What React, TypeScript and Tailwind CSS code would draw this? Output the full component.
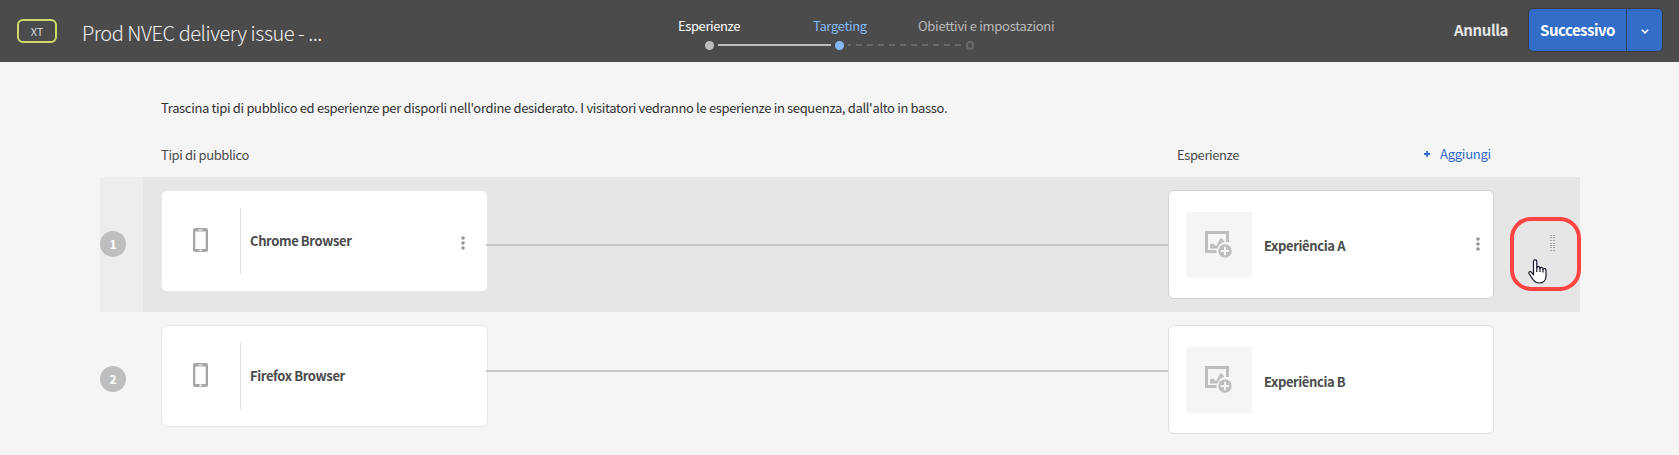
type Row = { id: number; audience: string; experience: string; active: boolean };

const rows: Row[] = [
  { id: 1, audience: "Chrome Browser", experience: "Experiência A", active: true },
  { id: 2, audience: "Firefox Browser", experience: "Experiência B", active: false },
];

function PhoneIcon() {
  return (
    <svg width="15" height="24" viewBox="0 0 15 24" className="block">
      <path
        fill="#a6a6a6"
        fillRule="evenodd"
        d="M2 0h11a2 2 0 0 1 2 2v20a2 2 0 0 1-2 2H2a2 2 0 0 1-2-2V2a2 2 0 0 1 2-2ZM2.300 3.600v17.400h10.400V3.600ZM5.500 1.400v1h4v-1ZM6.400 21.600v1.600h2.200v-1.600Z"
      />
    </svg>
  );
}

function ImageAddIcon() {
  return (
    <svg width="27" height="27" viewBox="0 0 27 27" className="block">
      <path fill="none" stroke="#bebebe" strokeWidth="3" d="M11.5 20.5H1.5V1.5h21v9.5" />
      <path fill="#bebebe" d="M5 17.5v-3.2c.6-1.4 2.3-2.4 3.8-1.2l2.3 2.1 4-7.4c.5-.8 1.6-.8 2.2 0l2 2.9c-3.400.7-6.100 3.400-6.800 6.800Z" />
      <circle cx="20" cy="20" r="6.700" fill="#bebebe" />
      <path stroke="#f5f5f5" strokeWidth="2" d="M20 15.700v8.600M15.700 20h8.600" />
    </svg>
  );
}

function MoreIcon() {
  return (
    <svg width="4" height="14" viewBox="0 0 4 14" className="block" fill="#969696">
      <circle cx="2" cy="2" r="1.800" />
      <circle cx="2" cy="7" r="1.800" />
      <circle cx="2" cy="12" r="1.800" />
    </svg>
  );
}

function DragHandle() {
  return (
    <svg width="6" height="17" viewBox="0 0 6 17" className="block" fill="#a8a8a8">
      {[0, 2, 5, 8, 10, 12, 15].map((y) => (
        <g key={y}>
          <rect x="0" y={y} width="2" height="1" />
          <rect x="3" y={y} width="2" height="1" />
        </g>
      ))}
    </svg>
  );
}

function HandCursor() {
  return (
    <svg width="19" height="25" viewBox="0 0 19 25" className="block">
      <path
        fill="#fff"
        stroke="#15152a"
        strokeWidth="1.200"
        strokeLinejoin="round"
        d="M5.500 16V2.500C5.500.3 8.800.3 8.800 2.500V8.500C9.500 7 12 7.300 12 9.200 12.800 8 15 8.300 15 10 16 9 18 9.600 18 11.300V17C18 21 15.500 24 11.300 24 8 24 6.300 22.800 4.900 20.300L1 14.500C.3 12.800 2.200 11.900 3.400 13.200Z"
      />
      <path stroke="#15152a" strokeWidth="1.200" d="M8.800 8v5M12 9v4M15 10v3.500" />
    </svg>
  );
}

function Header() {
  return (
    <header className="flex h-[62px] items-start bg-[#4b4b4b]">
      <div className="mt-[19px] ml-[17px] flex h-6 w-10 items-center justify-center rounded-[6px] border-2 border-[#d0dc68] text-[11px] leading-5 text-[#d6d6d6]">
        XT
      </div>
      <h1 className="mt-[19px] ml-[25px] w-[596px] text-[20px] leading-7 font-light tracking-[-0.450px] text-[#f0f0f0]">
        Prod NVEC delivery issue - ...
      </h1>

      <nav className="mt-[16px] w-[380px]">
        <div className="flex text-[13px] leading-5 whitespace-nowrap">
          <span className="w-[135px] tracking-[-0.400px] text-white">Esperienze</span>
          <span className="w-[105px] tracking-[-0.340px] text-[#82b8f8]">Targeting</span>
          <span className="tracking-[-0.290px] text-[#b9b9b9]">Obiettivi e impostazioni</span>
        </div>
        <div className="mt-[5px] ml-[27px] flex h-[9px] items-center">
          <span className="size-[9px] rounded-full bg-[#bebebe]" />
          <span className="mx-1 mb-px h-[2px] w-[113px] bg-[#bebebe]" />
          <span className="mr-1 size-[9px] rounded-full bg-[#82b8f8]" />
          <svg width="114" height="2" className="mr-1 mb-px block">
            <path d="M0 1h114" stroke="#6a6a6a" strokeWidth="2" strokeDasharray="6 5" strokeDashoffset="3" />
          </svg>
          <span className="h-[9px] w-2 rounded-full border-2 border-[#696969]" />
        </div>
      </nav>

      <div className="mt-[8px] mr-4 ml-auto flex h-[44px] items-center">
        <button className="mr-[20px] text-[15px] leading-5 font-bold tracking-[-0.400px] text-[#e4e4e4]">Annulla</button>
        <div className="flex h-[44px] overflow-hidden rounded-[5px] border border-[#3a3a3a] bg-[#326ec8]">
          <button className="w-[98px] border-r border-[#2c4167] text-center text-[15px] leading-5 font-bold tracking-[-0.500px] text-white">
            Successivo
          </button>
          <button className="flex w-[35px] items-center justify-center pt-[3px]">
            <svg width="8" height="5" viewBox="0 0 8 5" className="block">
              <path d="M.8.8 4 3.900 7.200.8" fill="none" stroke="#fff" strokeWidth="1.500" />
            </svg>
          </button>
        </div>
      </div>
    </header>
  );
}

function TargetRow({ row }: { row: Row }) {
  return (
    <div className="flex h-[135px] w-[1480px]">
      <div className={row.active ? "w-[43px] bg-[#ededed] pt-[54px]" : "w-[43px] pt-[54px]"}>
        <div className="flex size-[26px] items-center justify-center rounded-full bg-[#bebebe] text-[12px] leading-5 font-bold text-white">
          {row.id}
        </div>
      </div>
      <div className={row.active ? "flex flex-1 items-start bg-[#e6e6e6] pt-[13px] pl-[18px]" : "flex flex-1 items-start pt-[13px] pl-[18px]"}>
        <div className="flex h-[102px] w-[327px] items-center rounded-[6px] border border-[#e9e9e9] bg-white">
          <div className="mb-[2px] ml-[31px]">
            <PhoneIcon />
          </div>
          <div className="ml-[32px] h-[66px] w-px bg-[#dedede]" />
          <span className="mb-px ml-[9px] text-[13px] leading-5 font-bold tracking-[-0.380px] text-[#4b4b4b]">{row.audience}</span>
          {row.active && (
            <div className="mt-[3px] mr-[22px] ml-auto">
              <MoreIcon />
            </div>
          )}
        </div>
        <div className={row.active ? "z-10 mt-[54px] -ml-[2px] h-[2px] w-[682px] bg-[#c6c6c6]" : "z-10 mt-[45px] -ml-[2px] h-[2px] w-[682px] bg-[#c6c6c6]"} />
        <div className={row.active ? "flex h-[109px] w-[326px] items-center rounded-[6px] border border-[#d2d2d2] bg-white" : "flex h-[109px] w-[326px] items-center rounded-[6px] border border-[#e0e0e0] bg-white"}>
          <div className="ml-[17px] flex size-[66px] items-center justify-center bg-[#f5f5f5] pr-px">
            <ImageAddIcon />
          </div>
          <span className={row.active ? "mt-[3px] ml-[12px] text-[13px] leading-5 font-bold tracking-[-0.370px] text-[#4b4b4b]" : "mt-[5px] ml-[12px] text-[13px] leading-5 font-bold tracking-[-0.400px] text-[#4b4b4b]"}>
            {row.experience}
          </span>
          {row.active && (
            <div className="mr-[13px] mb-[2px] ml-auto">
              <MoreIcon />
            </div>
          )}
        </div>
        {row.active && (
          <div className="mt-[45px] ml-[56px]">
            <DragHandle />
          </div>
        )}
      </div>
    </div>
  );
}

export default function App() {
  return (
    <div className="relative h-[455px] w-[1679px] overflow-hidden bg-[#f5f5f5] font-['Noto_Sans_CJK_SC',sans-serif]">
      <Header />
      <main className="pt-[36px] pl-[100px]">
        <p className="ml-[61px] text-[13px] leading-5 tracking-[-0.338px] text-[#323232]">
          Trascina tipi di pubblico ed esperienze per disporli nell'ordine desiderato. I visitatori vedranno le esperienze in sequenza, dall'alto in basso.
        </p>
        <div className="flex h-[59px] items-start pt-[27px] pl-[61px] text-[13px] leading-5 text-[#4b4b4b]">
          <span className="w-[1016px] tracking-[-0.370px]">Tipi di pubblico</span>
          <span className="w-[247px] tracking-[-0.400px]">Esperienze</span>
          <button className="-mt-px flex items-center text-[#326ec8]">
            <svg width="6" height="6" className="mr-[10px] block">
              <path d="M3 0v6M0 3h6" stroke="#326ec8" strokeWidth="1.800" />
            </svg>
            <span className="tracking-[-0.250px]">Aggiungi</span>
          </button>
        </div>
        {rows.map((row) => (
          <TargetRow key={row.id} row={row} />
        ))}
      </main>
      <div className="absolute top-[217px] left-[1510px] h-[74px] w-[71px] rounded-[21px] border-4 border-[#ff4343]" />
      <div className="absolute top-[259px] left-[1528px]">
        <HandCursor />
      </div>
    </div>
  );
}
